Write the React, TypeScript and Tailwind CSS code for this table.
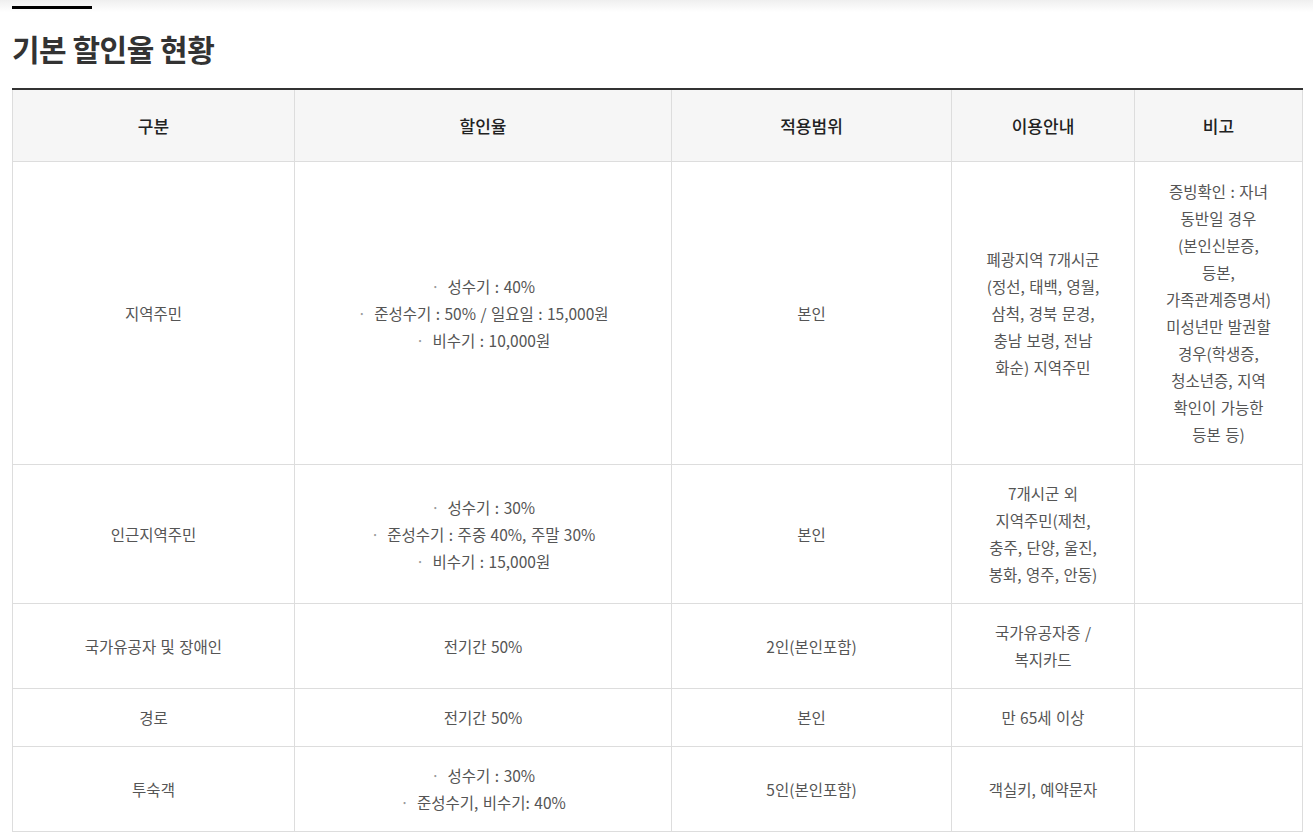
import React from 'react';

type Row = {
  type: string;
  rate: React.ReactNode;
  scope: string;
  guide: string[];
  note?: string[];
};

const Bullets = ({ items }: { items: string[] }) => (
  <>
    {items.map((item) => (
      <div key={item} className="whitespace-nowrap">
        <span className="text-[#999]">·</span>
        <span className="ml-[8px]">{item}</span>
      </div>
    ))}
  </>
);

const rows: Row[] = [
  {
    type: '지역주민',
    rate: <Bullets items={['성수기 : 40%', '준성수기 : 50% / 일요일 : 15,000원', '비수기 : 10,000원']} />,
    scope: '본인',
    guide: ['폐광지역 7개시군', '(정선, 태백, 영월,', '삼척, 경북 문경,', '충남 보령, 전남', '화순) 지역주민'],
    note: [
      '증빙확인 : 자녀',
      '동반일 경우',
      '(본인신분증,',
      '등본,',
      '가족관계증명서)',
      '미성년만 발권할',
      '경우(학생증,',
      '청소년증, 지역',
      '확인이 가능한',
      '등본 등)',
    ],
  },
  {
    type: '인근지역주민',
    rate: <Bullets items={['성수기 : 30%', '준성수기 : 주중 40%, 주말 30%', '비수기 : 15,000원']} />,
    scope: '본인',
    guide: ['7개시군 외', '지역주민(제천,', '충주, 단양, 울진,', '봉화, 영주, 안동)'],
  },
  {
    type: '국가유공자 및 장애인',
    rate: '전기간 50%',
    scope: '2인(본인포함)',
    guide: ['국가유공자증 /', '복지카드'],
  },
  {
    type: '경로',
    rate: '전기간 50%',
    scope: '본인',
    guide: ['만 65세 이상'],
  },
  {
    type: '투숙객',
    rate: <Bullets items={['성수기 : 30%', '준성수기, 비수기: 40%']} />,
    scope: '5인(본인포함)',
    guide: ['객실키, 예약문자'],
  },
];

const Lines = ({ lines }: { lines?: string[] }) => (
  <>
    {lines?.map((line) => (
      <div key={line} className="whitespace-nowrap">
        {line}
      </div>
    ))}
  </>
);

const headers = ['구분', '할인율', '적용범위', '이용안내', '비고'];

const td = 'border border-[#dddddd] px-3 py-[15px] text-center align-middle';

export default function App() {
  return (
    <div
      className="min-h-screen bg-[linear-gradient(to_bottom,#efefef_0px,#ffffff_12px)] px-3 pt-[6px] text-[15.5px] leading-[27px] text-[#555] [word-spacing:1px]"
      style={{ fontFamily: '"Noto Sans CJK KR", "Noto Sans", sans-serif' }}
    >
      <div className="h-[3px] w-20 bg-black" />
      <h2 className="mt-[17px] text-[30px] font-bold leading-[44px] tracking-[-0.5px] text-[#333] [word-spacing:0px]">
        기본 할인율 현황
      </h2>

      {/* discount table */}
      <table className="mt-[18px] w-[1290px] table-fixed border-collapse">
        <colgroup>
          <col className="w-[282px]" />
          <col className="w-[377px]" />
          <col className="w-[280px]" />
          <col className="w-[183px]" />
          <col className="w-[168px]" />
        </colgroup>
        <thead>
          <tr className="bg-[#f6f6f6]">
            {headers.map((h) => (
              <th
                key={h}
                className="border border-[#dddddd] border-t-2 border-t-[#333] py-[22px] text-center text-[17px] font-medium text-[#222]"
              >
                {h}
              </th>
            ))}
          </tr>
        </thead>
        <tbody>
          {rows.map((row, i) => (
            <tr key={row.type}>
              <td className={`${td} ${i === 0 ? 'py-[16px]' : ''}`}>{row.type}</td>
              <td className={td}>{row.rate}</td>
              <td className={td}>{row.scope}</td>
              <td className={td}>
                <Lines lines={row.guide} />
              </td>
              <td className={`${td} ${i === 0 ? '!py-[16px]' : ''}`}>
                <Lines lines={row.note} />
              </td>
            </tr>
          ))}
        </tbody>
      </table>
    </div>
  );
}
